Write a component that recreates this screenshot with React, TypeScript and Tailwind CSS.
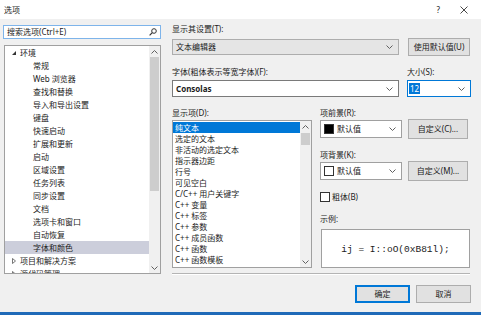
import React from "react";

const font = "font-['Noto_Sans','Noto_Sans_CJK_SC',sans-serif]";

const envItems = [
  "常规",
  "Web 浏览器",
  "查找和替换",
  "导入和导出设置",
  "键盘",
  "快速启动",
  "扩展和更新",
  "启动",
  "区域设置",
  "任务列表",
  "同步设置",
  "文档",
  "选项卡和窗口",
  "自动恢复",
  "字体和颜色",
];

const displayItems = [
  "纯文本",
  "选定的文本",
  "非活动的选定文本",
  "指示器边距",
  "行号",
  "可见空白",
  "C/C++ 用户关键字",
  "C++ 变量",
  "C++ 标签",
  "C++ 参数",
  "C++ 成员函数",
  "C++ 函数",
  "C++ 函数模板",
  "C++ 局部变量",
];

function Chevron({ up = false }: { up?: boolean }) {
  return (
    <svg width="7" height="4" viewBox="0 0 7 4" className="shrink-0">
      <polyline
        points={up ? "0.5,3.5 3.5,0.5 6.5,3.5" : "0.5,0.5 3.5,3.5 6.5,0.5"}
        fill="none"
        stroke="#606060"
        strokeWidth="1"
      />
    </svg>
  );
}

function ScrollBar({ thumb }: { thumb: string }) {
  return (
    <div className="flex w-[11px] shrink-0 flex-col bg-[#f0f0f0]">
      <div className="flex h-[11px] shrink-0 items-center justify-center">
        <Chevron up />
      </div>
      <div className="flex flex-1 flex-col items-center">
        <div className={`w-[9px] bg-[#cdcdcd] ${thumb}`} />
      </div>
      <div className="flex h-[11px] shrink-0 items-center justify-center">
        <Chevron />
      </div>
    </div>
  );
}

function Button({
  label,
  className,
}: {
  label: string;
  className: string;
}) {
  return (
    <div
      className={`flex items-center justify-center border bg-[#e1e1e1] ${className}`}
    >
      {label}
    </div>
  );
}

function ColorCombo({ swatch }: { swatch: string }) {
  return (
    <div className="flex h-[18px] w-[82px] items-center border border-[#a0a0a0] bg-white pl-[3px] pr-[5px]">
      <div className={`h-[10px] w-[10px] border border-[#333] ${swatch}`} />
      <span className="ml-[3px] flex-1">默认值</span>
      <Chevron />
    </div>
  );
}

export default function App() {
  return (
    <div
      className={`${font} flex h-[315px] w-[481px] flex-col overflow-hidden bg-[#f0f0f0] text-[8px] leading-[10px] text-[#1b1b1b]`}
    >
      {/* title bar */}
      <div className="flex h-[19px] shrink-0 items-center bg-white pl-[4px]">
        <span>选项</span>
        <span className="ml-auto text-[8px]">?</span>
        <svg width="8" height="8" viewBox="0 0 8 8" className="ml-[20px] mr-[13px]">
          <path d="M0.5 0.5 L7.5 7.5 M7.5 0.5 L0.5 7.5" stroke="#333" strokeWidth="0.9" />
        </svg>
      </div>

      <div className="flex flex-1">
        {/* left column */}
        <div className="ml-[4px] flex w-[157px] flex-col">
          <div className="mt-[6px] -ml-[1px] flex h-[14px] items-center justify-between border border-[#7eb4ea] bg-white px-[3px]">
            <span>搜索选项(Ctrl+E)</span>
            <svg width="8" height="8" viewBox="0 0 8 8">
              <circle cx="5" cy="3" r="2.3" fill="none" stroke="#333" strokeWidth="1" />
              <path d="M3.3 4.7 L0.6 7.4" stroke="#333" strokeWidth="1.2" />
            </svg>
          </div>
          <div className="mt-[6px] flex h-[229px] overflow-hidden border border-[#a0a0a0] bg-white">
            <div className="flex-1 overflow-hidden">
              <div className="flex h-[13px] items-center pl-[7px]">
                <svg width="4" height="4" viewBox="0 0 4 4">
                  <polygon points="4,0 4,4 0,4" fill="#333" />
                </svg>
                <span className="ml-[4px]">环境</span>
              </div>
              {envItems.map((item) => (
                <div
                  key={item}
                  className={`flex h-[13px] items-center pl-[28px] ${
                    item === "字体和颜色" ? "bg-[#cccedb]" : ""
                  }`}
                >
                  {item}
                </div>
              ))}
              {["项目和解决方案", "源代码管理"].map((item) => (
                <div key={item} className="flex h-[13px] items-center pl-[7px]">
                  <svg width="4" height="6" viewBox="0 0 4 6">
                    <polygon points="0.5,0.5 3.5,3 0.5,5.5" fill="none" stroke="#555" strokeWidth="0.8" />
                  </svg>
                  <span className="ml-[4px]">{item}</span>
                </div>
              ))}
            </div>
            <ScrollBar thumb="h-[134px]" />
          </div>
        </div>

        {/* right column */}
        <div className="ml-[11px] flex w-[299px] flex-col">
          <div className="mt-[5px] h-[10px]">显示其设置(T):</div>
          <div className="mt-[4px] flex h-[18px] items-center">
            <div className="flex h-[16px] w-[227px] items-center justify-between border border-[#adadad] bg-[#e5e5e5] pl-[3px] pr-[5px]">
              <span>文本编辑器</span>
              <Chevron />
            </div>
            <Button
              label="使用默认值(U)"
              className="ml-[9px] h-[18px] w-[62px] border-[#adadad]"
            />
          </div>

          <div className="mt-[11px] flex h-[10px]">
            <span className="w-[235px]">字体(粗体表示等宽字体)(F):</span>
            <span>大小(S):</span>
          </div>
          <div className="mt-[3px] flex h-[17px]">
            <div className="flex w-[227px] items-center justify-between border border-[#7a7a7a] bg-white pl-[3px] pr-[5px]">
              <span className="font-bold">Consolas</span>
              <Chevron />
            </div>
            <div className="ml-[8px] flex w-[64px] items-center justify-between border border-[#0078d7] bg-white pl-[1px] pr-[5px]">
              <span className="bg-[#0078d7] px-[1px] leading-[11px] text-white">12</span>
              <Chevron />
            </div>
          </div>

          <div className="mt-[11px] flex">
            {/* display items */}
            <div className="flex w-[140px] flex-col">
              <div className="h-[10px]">显示项(D):</div>
              <div className="mt-[2px] flex h-[148px] overflow-hidden border border-[#a0a0a0] bg-white">
                <div className="flex-1 overflow-hidden pt-[1px]">
                  {displayItems.map((item, index) => (
                    <div
                      key={item}
                      className={`flex h-[11px] items-center pl-[2px] ${
                        index === 0 ? "ml-[0px] bg-[#0078d7] text-white" : ""
                      }`}
                    >
                      {item}
                    </div>
                  ))}
                </div>
                <ScrollBar thumb="mt-[1px] h-[12px]" />
              </div>
            </div>

            {/* colour settings */}
            <div className="ml-[8px] flex w-[151px] flex-col">
              <div className="h-[10px]">项前景(R):</div>
              <div className="mt-[1px] flex h-[20px] items-center">
                <ColorCombo swatch="bg-black" />
                <Button
                  label="自定义(C)..."
                  className="ml-[6px] h-[20px] w-[60px] border-[#adadad]"
                />
              </div>

              <div className="mt-[11px] h-[10px]">项背景(K):</div>
              <div className="mt-[1px] flex h-[20px] items-center">
                <ColorCombo swatch="bg-white" />
                <Button
                  label="自定义(M)..."
                  className="ml-[6px] h-[20px] w-[60px] border-[#adadad]"
                />
              </div>

              <div className="mt-[11px] flex h-[10px] items-center">
                <div className="h-[10px] w-[10px] border border-[#333] bg-white" />
                <span className="ml-[2px]">粗体(B)</span>
              </div>

              <div className="mt-[12px] h-[10px]">示例:</div>
              <div className="mt-[5px] ml-[1px] flex h-[39px] w-[149px] items-center justify-center border border-[#a0a0a0] bg-white">
                <span className="pt-[3px] font-['Liberation_Mono',monospace] text-[9.5px] leading-[12px] whitespace-pre text-[#1b1b1b]">
                  ij = I::oO(0xB81l);
                </span>
              </div>
            </div>
          </div>

          <div className="mt-[5px] h-[1px] w-[298px] bg-[#b4b4b4]" />
          <div className="h-[1px] w-[298px] bg-white" />

          <div className="mt-[10px] flex justify-end">
            <Button
              label="确定"
              className="h-[18px] w-[55px] border-[#0078d7] shadow-[inset_0_0_0_1px_#0078d7]"
            />
            <Button
              label="取消"
              className="ml-[6px] h-[18px] w-[55px] border-[#adadad]"
            />
          </div>
        </div>
      </div>

      <div className="h-[3px] shrink-0 bg-[#1f6ab8]" />
    </div>
  );
}
